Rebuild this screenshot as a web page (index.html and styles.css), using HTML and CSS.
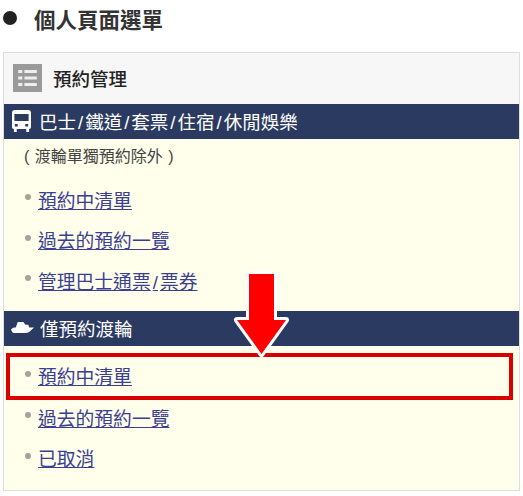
FILE: index.html
```html
<!DOCTYPE html>
<html lang="zh-Hant">

<head>
    <meta charset="UTF-8">
    <title>個人頁面選單</title>
    <link rel="stylesheet" href="styles.css">
</head>

<body>
    <h1 class="title"><span class="title-dot"></span>個人頁面選單</h1>

    <div class="panel">
        <div class="panel-head">
            <span class="list-icon"><svg viewBox="0 0 28 28" width="29" height="28" preserveAspectRatio="none"><path fill="#9a9a9a" d="M0 0h28v28H0z"/><path fill="#eee" d="M5 6h4v3H5zM11 6h12v3H11zM5 12.500h4v3H5zM11 12.500h12v3H11zM5 19h4v3H5zM11 19h12v3H11z"/></svg></span>
            預約管理
        </div>

        <div class="bar">
            <svg class="bar-icon" viewBox="0 0 20 22" width="19" height="22" preserveAspectRatio="none"><path fill="#fff" d="M3 0h14a3 3 0 0 1 3 3v14a2 2 0 0 1-2 2v3h-3v-3H5v3H2v-3a2 2 0 0 1-2-2V3a3 3 0 0 1 3-3zM2.500 4v7h15V4zM3 14v2.500h3V14zM14 14v2.500h3V14z" fill-rule="evenodd"/></svg>
            <span>巴士<i class="sep">/</i>鐵道<i class="sep">/</i>套票<i class="sep">/</i>住宿<i class="sep">/</i>休閒娛樂</span>
        </div>
        <p class="note">( 渡輪單獨預約除外 )</p>
        <ul class="links">
            <li><a href="#">預約中清單</a></li>
            <li><a href="#">過去的預約一覽</a></li>
            <li><a href="#">管理巴士通票<i class="sep">/</i>票券</a></li>
        </ul>

        <div class="bar bar-ferry">
            <svg class="bar-icon" viewBox="0 0 24 12" width="23" height="11" preserveAspectRatio="none"><path fill="#fff" d="M7 0h6l2 3h3l1 3h5l-3 3q-2 3-5 3H3q-2 0-3-4l3-2h2z"/></svg>
            僅預約渡輪
        </div>
        <ul class="links links-ferry">
            <li class="marked"><a href="#">預約中清單</a></li>
            <li><a href="#">過去的預約一覽</a></li>
            <li><a href="#">已取消</a></li>
        </ul>
    </div>

    <!-- 紅色箭頭 -->
    <svg class="arrow" viewBox="0 0 64 90" width="64" height="90"><path fill="#f00" stroke="#fff" stroke-width="6" stroke-linejoin="round" paint-order="stroke" d="M19 4h25v46h12L31.500 84 7 50h12z"/></svg>
</body>

</html>
```

FILE: styles.css
```css
* {
    margin: 0;
    padding: 0;
    box-sizing: border-box;
    list-style: none;
}

body {
    position: relative;
    width: 523px;
    height: 496px;
    padding: 0 3px;
    overflow: hidden;
    background: #fff;
    color: #333;
    font-family: "Liberation Sans", "Noto Sans CJK TC", sans-serif;
}

.title {
    display: flex;
    align-items: center;
    height: 36px;
    margin-bottom: 16px;
    color: #333;
    font-size: 21.500px;
    font-weight: bold;
}

.title-dot {
    width: 14px;
    height: 14px;
    margin-right: 17px;
    border-radius: 50%;
    background: #222;
}

.panel {
    width: 517px;
    height: 439px;
    border: 1px solid #ddd;
    background: #ffffeb;
}

.panel-head {
    display: flex;
    align-items: center;
    height: 51px;
    padding: 0 0 2px 9px;
    background: #f7f7f7;
    color: #222;
    font-size: 18.500px;
    font-weight: 500;
}

.list-icon {
    display: flex;
    margin-right: 11px;
}

.bar {
    display: flex;
    align-items: center;
    height: 35px;
    padding: 0 0 2px 8px;
    background: #2b3a60;
    color: #fff;
    font-size: 18.500px;
}

.bar-icon {
    margin-right: 8px;
}

.sep {
    padding: 0 2px;
    font-style: normal;
}

.bar-ferry {
    margin-top: 9.500px;
    padding-left: 7px;
}

.bar-ferry .bar-icon {
    margin-right: 6px;
}

.note {
    height: 36px;
    padding-left: 20px;
    font-size: 16px;
    line-height: 36px;
    color: #444;
    word-spacing: 1px;
}

.links {
    padding-top: 5px;
}

.links li {
    display: flex;
    align-items: center;
    height: 40.500px;
    padding: 0 0 2px 21px;
    font-size: 18.800px;
}

.links li::before {
    content: "";
    width: 6px;
    height: 6px;
    margin-top: -4px;
    margin-right: 7px;
    border-radius: 50%;
    background: #a3a397;
}

.links a {
    color: #3b3f92;
    text-decoration: underline;
}

.links-ferry {
    padding: 7px 6px 0 2px;
}

.links-ferry li {
    padding-left: 19px;
}

.links-ferry .marked {
    height: 47px;
    margin-bottom: -2px;
    padding: 0 0 2px 15px;
    border: 4px solid #d90000;
}

/* 疊在面板上的箭頭 */
.arrow {
    position: absolute;
    left: 230px;
    top: 270px;
}
```
